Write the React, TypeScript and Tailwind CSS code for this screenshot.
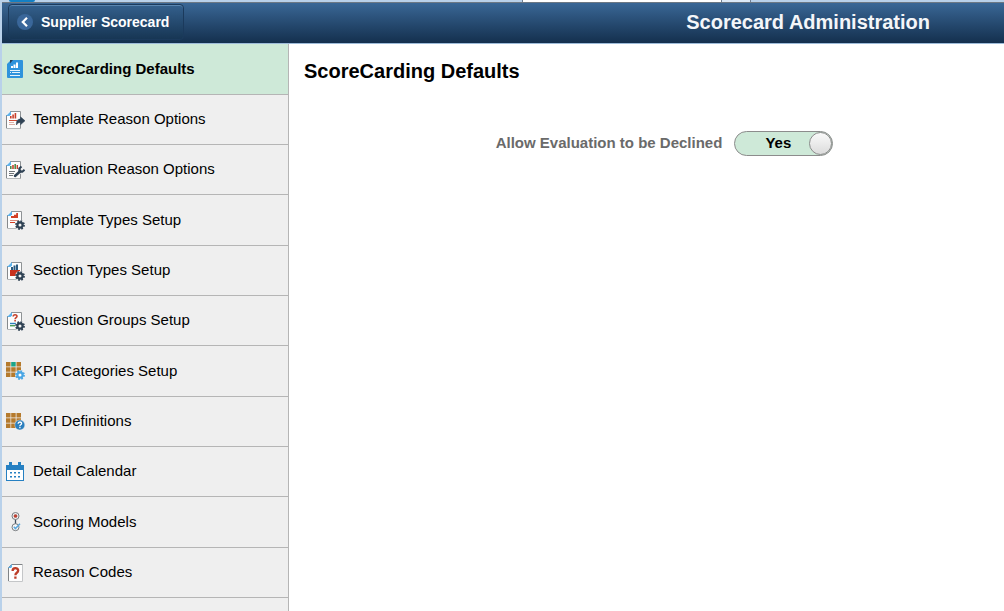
import { useState } from "react";
import type { ReactNode } from "react";
import clsx from "clsx";

function Icon({ children }: { children: ReactNode }) {
	return (
		<svg viewBox="0 0 20 20" className="h-5 w-5 shrink-0" fill="none" aria-hidden="true">
			{children}
		</svg>
	);
}

// White sheet with a folded blue corner, shared by most of the menu icons
function Sheet({ x = 2 }: { x?: number }) {
	return (
		<g transform={`translate(${x} 1)`}>
			<path d="M4 .5H14.5V17.5H.5V4Z" fill="#fdfdfd" />
			<path d="M.5 4V17.5H14.5" stroke="#b5b8ba" />
			<path d="M4 .5H14.5V17.5" stroke="#8e9295" />
			<path d="M.5 17V4" stroke="#85898c" />
			<path d="M0 5 5 0V3.5L3.5 5Z" fill="#5fb2ea" />
		</g>
	);
}

function Gear({ y = 15, color = "#2f4254", hole = "#f3f3f3" }: { y?: number; color?: string; hole?: string }) {
	return (
		<g>
			<circle cx="15" cy={y} r="5" fill="#f3f3f3" opacity="0.8" />
			<circle cx="15" cy={y} r="2.6" fill={hole} stroke={color} strokeWidth="2.2" />
			<circle cx="15" cy={y} r="4" stroke={color} strokeWidth="1.8" strokeDasharray="1.7 1.44" />
		</g>
	);
}

function Tiles({ accent = "#b57a2c" }: { accent?: string }) {
	return (
		<g fill="#b57a2c">
			<path d="M1 1h4.5v4.5H1zM11.5 1H16v4.5h-4.5zM1 6.3h4.5v4.5H1zM6.2 6.3h4.5v4.5H6.2zM11.5 6.3H16v4.5h-4.5zM1 11.6h4.5V16H1zM6.2 11.6h4.5V16H6.2z" />
			<path d="M6.2 1h4.5v4.5H6.2z" fill={accent} />
		</g>
	);
}

function DefaultsIcon() {
	return (
		<Icon>
			<path d="M6 1H17Q18 1 18 2V18Q18 19 17 19H3Q2 19 2 18V5Z" fill="#2e93dc" />
			<path d="M5 1H8L5 4.5Z" fill="#233f5b" />
			<path d="M6 7h2v2H6zM8.5 5.5h2V9h-2zM11 3.5h2V9h-2z" fill="#fff" />
			<path d="M5 11.5H15M5 13.5H6M7 13.5H15M5 16.5H15" stroke="#e5f3fc" />
		</Icon>
	);
}

function TemplateReasonIcon() {
	return (
		<Icon>
			<Sheet x={1} />
			<path d="M5 6h1.6v2.5H5zM7.3 4.5h1.6v4H7.3zM9.6 3h1.6v5.5H9.6z" fill="#c9402c" />
			<path d="M4 10.5h8" stroke="#cf4a34" />
			<path d="M4 12.5h5M4 14.5h6" stroke="#dbb0a6" />
			<path d="M11.5 15C11 11 12.5 9 15.5 9V6.8L20 10.8 15.5 14.8V12.5C13.5 12.5 12.3 13.3 11.5 15Z" fill="#2f4254" stroke="#2f4254" strokeWidth="0.5" />
		</Icon>
	);
}

function EvaluationReasonIcon() {
	return (
		<Icon>
			<Sheet x={1} />
			<path d="M5 6h1.6v3H5z" fill="#4c8d4d" />
			<path d="M7.2 5h1.6v4H7.2z" fill="#c9402c" />
			<path d="M9.4 4H11v5H9.4z" fill="#4c8d4d" />
			<path d="M11.6 5h1.4v4h-1.4z" fill="#c9402c" />
			<path d="M4 11.5h6M4 13.5h5M4 15.5h4" stroke="#70757a" />
			<path d="M9.5 16.5 15 11.5" stroke="#f3f3f3" strokeWidth="4" />
			<path d="M10 16 15.5 11" stroke="#2f4254" strokeWidth="2.5" strokeLinecap="round" />
			<path d="M16.5 6.5 14.3 8.5V11.8H17.3L19.5 9.8" stroke="#2f4254" strokeWidth="2" />
		</Icon>
	);
}

function TemplateTypesIcon() {
	return (
		<Icon>
			<Sheet />
			<path d="M6 6H9V4.8h2.2V3H13v5H6Z" fill="#d23f25" />
			<path d="M5 10.5h8" stroke="#d98a7c" />
			<path d="M5 12.5h5" stroke="#d23f25" />
			<Gear />
		</Icon>
	);
}

function SectionTypesIcon() {
	return (
		<Icon>
			<Sheet />
			<path d="M6 6h2v4H6zM8.5 4.5h2V10h-2zM11 3.5h2V10h-2z" fill="#29597f" />
			<path d="M5 9h10v6H5Z" fill="#c8321f" />
			<Gear />
		</Icon>
	);
}

function QuestionGroupsIcon() {
	return (
		<Icon>
			<Sheet />
			<path d="M8.2 5.6C8.2 3 12 3.2 12 5.3C12 6.8 10.1 6.6 10.1 8.3M10.1 9V10.4" stroke="#c5432e" strokeWidth="1.6" />
			<path d="M5 12.5h6" stroke="#2d7fbb" strokeWidth="1.4" />
			<path d="M5 14.7h5" stroke="#4c9d57" strokeWidth="1.4" />
			<Gear />
		</Icon>
	);
}

function KpiCategoriesIcon() {
	return (
		<Icon>
			<Tiles accent="#1ba58a" />
			<Gear y={14} color="#4aa6e4" hole="#fff" />
		</Icon>
	);
}

function KpiDefinitionsIcon() {
	return (
		<Icon>
			<Tiles />
			<circle cx="14.8" cy="13" r="5" fill="#2b7fbe" stroke="#f3f3f3" strokeWidth="0.4" />
			<path d="M13.1 11.8C13.1 9.4 16.6 9.5 16.6 11.5C16.6 12.9 14.9 12.7 14.9 14M14.9 14.8V16.2" stroke="#fff" strokeWidth="1.3" />
		</Icon>
	);
}

function CalendarIcon() {
	return (
		<Icon>
			<path d="M1 3H19V19H1Z" fill="#2680c2" />
			<path d="M4 0H7V4H4zM13 0H16V4H13z" fill="#2680c2" />
			<path d="M2 8H18V18H2Z" fill="#fff" />
			<path d="M5 10h2v1.5H5zM9 10h2v1.5H9zM13 10h2v1.5h-2zM5 14h2v1.5H5zM9 14h2v1.5H9zM13 14h2v1.5h-2z" fill="#2680c2" />
		</Icon>
	);
}

function ScoringModelsIcon() {
	return (
		<Icon>
			<path d="M10.5 7V12" stroke="#3e4e5d" strokeWidth="1.3" />
			<circle cx="10.5" cy="4" r="3.5" fill="#f8f8f8" stroke="#777b7f" />
			<circle cx="10.5" cy="4" r="1.6" fill="#c93c2a" stroke="#8d3a32" strokeWidth="0.5" />
			<circle cx="10.5" cy="15.2" r="3.5" fill="#f8f8f8" stroke="#777b7f" />
			<path d="M8.8 14.8 10.4 16.6 15 11.8" stroke="#5aa7dd" strokeWidth="1.5" />
		</Icon>
	);
}

function ReasonCodesIcon() {
	return (
		<Icon>
			<path d="M6.5 1.5H17.5V18.5H3.5V4.5Z" fill="#fdfdfd" />
			<path d="M3.5 18.5H17.5V2" stroke="#c4c6c8" />
			<path d="M3.5 18V4.5L6.5 1.5H17.5" stroke="#7f8386" />
			<path d="M3 5 7 1V4L6 5Z" fill="#5fb2ea" />
			<path d="M7.6 8C7.6 4.2 13.2 4.3 13.2 7.6C13.2 10 10.4 9.6 10.4 12.2M10.4 13.4V15.8" stroke="#bd3d29" strokeWidth="2.3" />
		</Icon>
	);
}

const menuItems = [
	{ label: "ScoreCarding Defaults", icon: DefaultsIcon },
	{ label: "Template Reason Options", icon: TemplateReasonIcon },
	{ label: "Evaluation Reason Options", icon: EvaluationReasonIcon },
	{ label: "Template Types Setup", icon: TemplateTypesIcon },
	{ label: "Section Types Setup", icon: SectionTypesIcon },
	{ label: "Question Groups Setup", icon: QuestionGroupsIcon },
	{ label: "KPI Categories Setup", icon: KpiCategoriesIcon },
	{ label: "KPI Definitions", icon: KpiDefinitionsIcon },
	{ label: "Detail Calendar", icon: CalendarIcon },
	{ label: "Scoring Models", icon: ScoringModelsIcon },
	{ label: "Reason Codes", icon: ReasonCodesIcon },
];

function BrowserEdge() {
	return (
		<div className="flex h-[2px] bg-[#b9d1ea]">
			<div className="ml-[9px] w-[26px] rounded-b-xs bg-[#1480c4]" />
			<div className="ml-auto w-[200px] border-x border-[#6f7f92] bg-white" />
			<div className="mr-[253px] w-[29px] border-r border-[#6f7f92] bg-[#dce9f7]" />
		</div>
	);
}

function Header() {
	return (
		<header className="flex h-[42px] items-center justify-between border-t border-b border-t-[#6d7884] border-b-[#9dbbd9] bg-linear-to-b from-[#3a6796] to-[#14304e] pr-[74px] pb-0.5 pl-1.5">
			<button
				type="button"
				className="flex h-9 items-center gap-2 rounded-sm border border-[#1b3a5c] bg-linear-to-b from-[#34608d] to-[#173654] pr-3.5 pl-2 text-sm font-bold text-white shadow-[inset_0_1px_0_#5a86b0]"
			>
				<svg viewBox="0 0 16 16" className="h-4 w-4" fill="none" aria-hidden="true">
					<circle cx="8" cy="8" r="8" fill="#3a679a" />
					<path d="M10 3.8 5.8 8 10 12.2" stroke="#fff" strokeWidth="2.2" />
				</svg>
				Supplier Scorecard
			</button>
			<h1 className="text-xl font-bold text-[#f4f6f9]">Scorecard Administration</h1>
		</header>
	);
}

function Sidebar({ active, onSelect }: { active: string; onSelect: (label: string) => void }) {
	return (
		<nav className="w-[287px] shrink-0 border-r border-[#b5b5b5] bg-[#efefef]">
			<ul>
				{menuItems.map(({ label, icon: ItemIcon }) => (
					<li
						key={label}
						className={clsx(
							"h-[50px] border-b border-[#b5b5b5] nth-[3n+1]:h-[51px]",
							label === active && "bg-[#cee9d8]",
						)}
					>
						<a
							href="#"
							onClick={(e) => {
								e.preventDefault();
								onSelect(label);
							}}
							className={clsx(
								"flex h-full items-center gap-2 pl-[3px] text-[15px] text-black",
								label === active && "font-bold",
							)}
						>
							<ItemIcon />
							{label}
						</a>
					</li>
				))}
			</ul>
		</nav>
	);
}

function DeclineToggle() {
	const [allowed, setAllowed] = useState(true);

	return (
		<div className="flex items-center gap-3">
			<label htmlFor="allow-decline" className="text-[15px] font-bold text-[#6a6a6a]">
				Allow Evaluation to be Declined
			</label>
			<button
				id="allow-decline"
				type="button"
				role="switch"
				aria-checked={allowed}
				onClick={() => setAllowed(!allowed)}
				className={clsx(
					"flex h-[25px] w-[99px] items-center rounded-full border border-[#8c8c8c] text-[15px] font-bold text-black",
					allowed ? "bg-[#cee9d8]" : "flex-row-reverse bg-[#e6e6e6]",
				)}
			>
				<span className={clsx("flex-1", allowed && "pl-3")}>{allowed ? "Yes" : "No"}</span>
				<span className="h-[23px] w-[23px] rounded-full border border-[#8c8c8c] bg-linear-to-b from-[#fafafa] to-[#dcdcdc]" />
			</button>
		</div>
	);
}

export default function App() {
	const [active, setActive] = useState("ScoreCarding Defaults");

	return (
		<div className="h-screen overflow-hidden bg-[#b9d1ea] font-['Liberation_Sans',Arial,sans-serif]">
			<BrowserEdge />
			<div className="ml-0.5 flex h-full flex-col">
				<Header />
				<div className="flex flex-1">
					<Sidebar active={active} onSelect={setActive} />
					<main className="flex-1 bg-white">
						<h2 className="px-[15px] pt-[13px] text-xl font-bold text-black">ScoreCarding Defaults</h2>
						<div className="flex justify-center pt-[46px] pl-9">
							<DeclineToggle />
						</div>
					</main>
				</div>
			</div>
		</div>
	);
}
